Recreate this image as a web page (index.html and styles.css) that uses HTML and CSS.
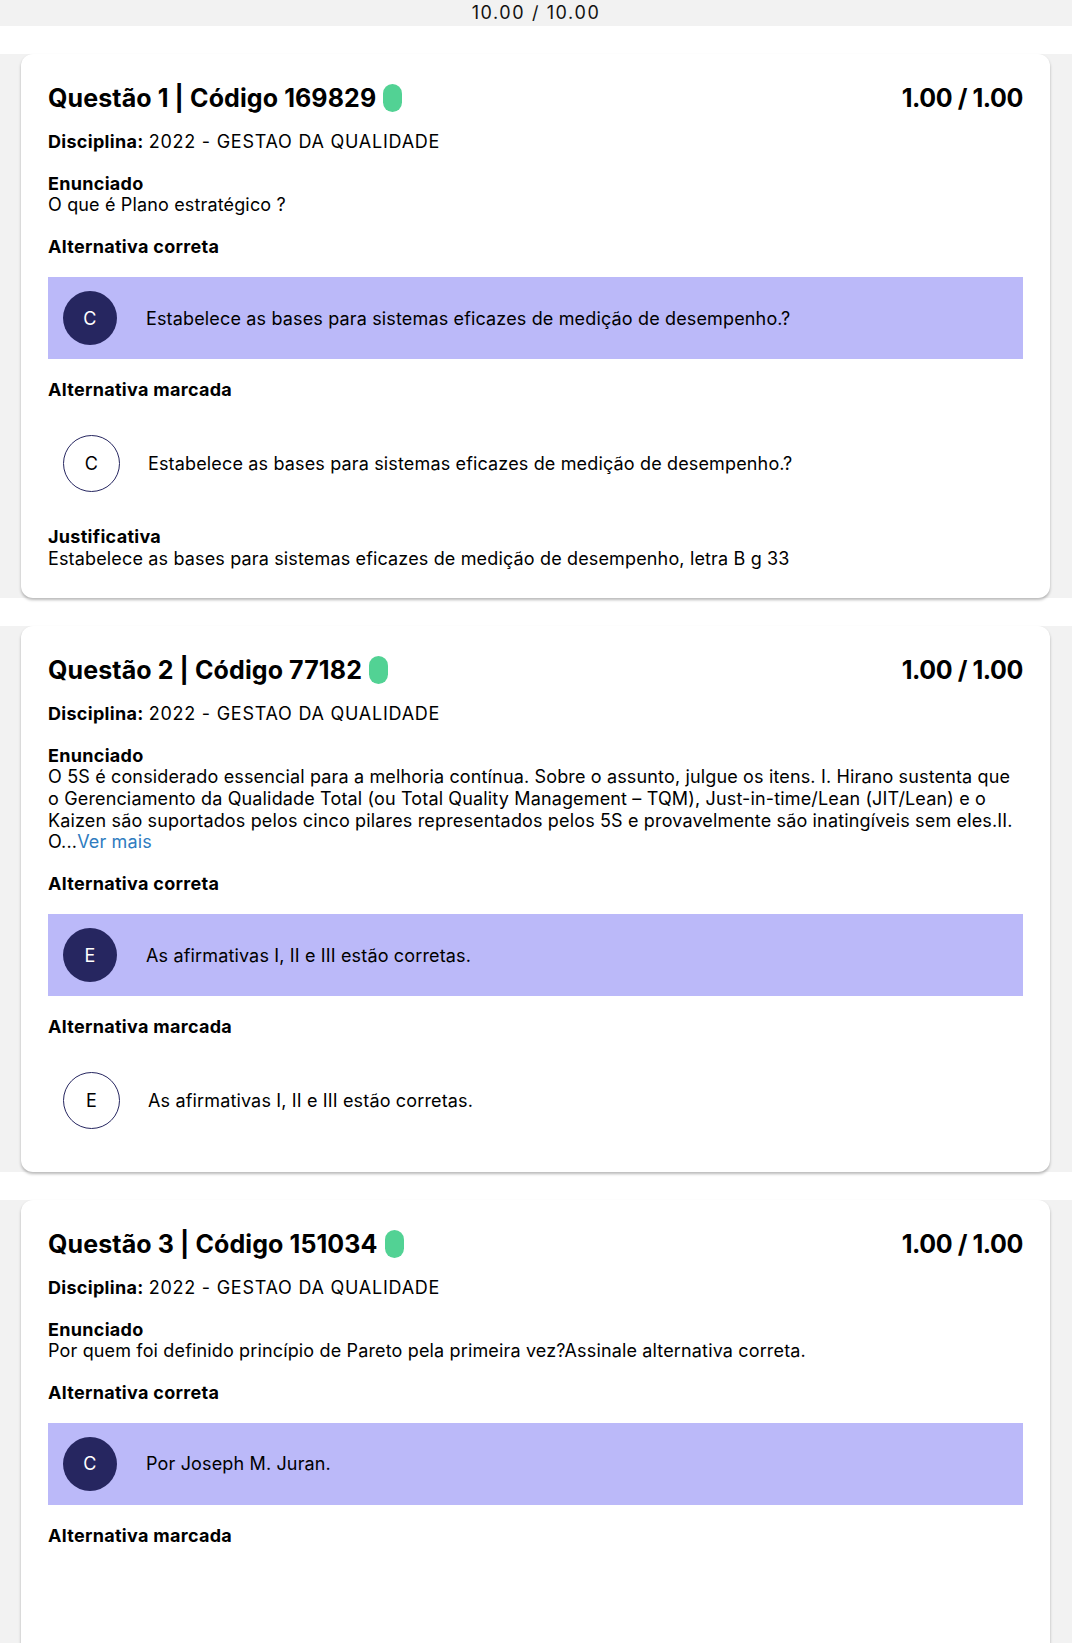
FILE: index.html
```html
<!DOCTYPE html>
<html lang="pt-BR">
<head>
<meta charset="utf-8">
<title>Resultado</title>
<link rel="stylesheet" href="styles.css">
</head>
<body>
<div class="topbar">10.00 / 10.00</div>

<div class="section">
  <div class="card">
    <div class="card-head">
      <h2 class="q-title">Questão 1 | Código 169829 <span class="pill"></span></h2>
      <div class="q-score">1.00 / 1.00</div>
    </div>
    <div class="field"><b class="label">Disciplina:</b> <span class="disc">2022 - GESTAO DA QUALIDADE</span></div>
    <div class="field">
      <div class="label">Enunciado</div>
      <div>O que é Plano estratégico ?</div>
    </div>
    <div class="label">Alternativa correta</div>
    <div class="option correct">
      <span class="letter">C</span>
      <span class="opt-text">Estabelece as bases para sistemas eficazes de medição de desempenho.?</span>
    </div>
    <div class="label">Alternativa marcada</div>
    <div class="option marked">
      <span class="letter">C</span>
      <span class="opt-text">Estabelece as bases para sistemas eficazes de medição de desempenho.?</span>
    </div>
    <div class="field">
      <div class="label">Justificativa</div>
      <div>Estabelece as bases para sistemas eficazes de medição de desempenho, letra B g 33</div>
    </div>
  </div>
</div>

<div class="section">
  <div class="card">
    <div class="card-head">
      <h2 class="q-title">Questão 2 | Código 77182 <span class="pill"></span></h2>
      <div class="q-score">1.00 / 1.00</div>
    </div>
    <div class="field"><b class="label">Disciplina:</b> <span class="disc">2022 - GESTAO DA QUALIDADE</span></div>
    <div class="field">
      <div class="label">Enunciado</div>
      <div>O 5S é considerado essencial para a melhoria contínua. Sobre o assunto, julgue os itens. I. Hirano sustenta que<br>o Gerenciamento da Qualidade Total (ou Total Quality Management – TQM), Just-in-time/Lean (JIT/Lean) e o<br>Kaizen são suportados pelos cinco pilares representados pelos 5S e provavelmente são inatingíveis sem eles.II.<br>O...<a class="more" href="#">Ver mais</a></div>
    </div>
    <div class="label">Alternativa correta</div>
    <div class="option correct">
      <span class="letter">E</span>
      <span class="opt-text">As afirmativas I, II e III estão corretas.</span>
    </div>
    <div class="label">Alternativa marcada</div>
    <div class="option marked">
      <span class="letter">E</span>
      <span class="opt-text">As afirmativas I, II e III estão corretas.</span>
    </div>
  </div>
</div>

<div class="section">
  <div class="card">
    <div class="card-head">
      <h2 class="q-title">Questão 3 | Código 151034 <span class="pill"></span></h2>
      <div class="q-score">1.00 / 1.00</div>
    </div>
    <div class="field"><b class="label">Disciplina:</b> <span class="disc">2022 - GESTAO DA QUALIDADE</span></div>
    <div class="field">
      <div class="label">Enunciado</div>
      <div>Por quem foi definido princípio de Pareto pela primeira vez?Assinale alternativa correta.</div>
    </div>
    <div class="label">Alternativa correta</div>
    <div class="option correct">
      <span class="letter">C</span>
      <span class="opt-text">Por Joseph M. Juran.</span>
    </div>
    <div class="label">Alternativa marcada</div>
    <div class="option empty"></div>
  </div>
</div>
</body>
</html>
```

FILE: styles.css
```css
html, body {
  margin: 0;
  padding: 0;
  background: #ffffff;
}

body {
  font-family: Inter, "Liberation Sans", Arial, sans-serif;
  font-size: 18px;
  line-height: 1.2;
  letter-spacing: 0.15px;
  color: #000;
}

.topbar {
  background: #f2f2f2;
  height: 26px;
  line-height: 26px;
  text-align: center;
  font-size: 18px;
  letter-spacing: 1.6px;
  color: #111;
}

.section {
  background: #f2f2f2;
  padding: 0 22px 0 21px;
  margin-top: 28px;
}

.section:first-of-type {
  margin-top: 27px;
}

.card {
  background: #fff;
  border-radius: 12px;
  box-shadow: 0 2px 3px rgba(0, 0, 0, 0.28);
  padding: 29px 27px 29px 27px;
  display: flex;
  flex-direction: column;
  gap: 20px;
}

.card-head {
  display: flex;
  justify-content: space-between;
  align-items: center;
  height: 30px;
  margin-bottom: -2px;
}

.q-title {
  margin: 0;
  font-size: 25px;
  line-height: 30px;
  font-weight: bold;
  letter-spacing: 0.1px;
  display: flex;
  align-items: center;
  gap: 7px;
}

.pill {
  display: inline-block;
  width: 19px;
  height: 28px;
  border-radius: 10px;
  background: #52d294;
}

.q-score {
  font-size: 25px;
  line-height: 30px;
  font-weight: bold;
  letter-spacing: -0.4px;
}

.label {
  font-weight: bold;
  letter-spacing: 0.3px;
}

.disc {
  letter-spacing: 0.75px;
}

.option {
  display: flex;
  align-items: center;
  gap: 29px;
  padding: 14px 15px;
  min-height: 54px;
}

.option.correct {
  background: #bbb9f9;
}

.option.marked {
  padding: 14px 15px;
  gap: 28px;
}

.option.empty {
  height: 57px;
}

.letter {
  flex: none;
  width: 54px;
  height: 54px;
  border-radius: 50%;
  display: flex;
  align-items: center;
  justify-content: center;
  background: #262660;
  color: #fff;
  font-size: 18px;
}

.marked .letter {
  width: 57px;
  height: 57px;
  box-sizing: border-box;
  background: transparent;
  border: 1.5px solid #262660;
  color: #000;
}

.more {
  color: #2e7cc0;
  text-decoration: none;
}
```
